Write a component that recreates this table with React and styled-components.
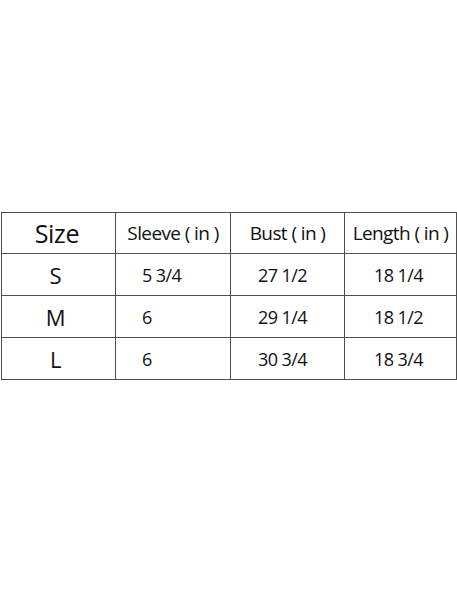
import React from 'react';
import styled, { createGlobalStyle } from 'styled-components';

const Global = createGlobalStyle`
  html, body {
    margin: 0;
    padding: 0;
    background: #fff;
  }
`;

const Page = styled.div`
  width: 457px;
  height: 600px;
  padding: 212px 0 0 1px;
  box-sizing: border-box;
  font-family: "Open Sans", "Noto Sans", sans-serif;
  color: #111;
`;

const Table = styled.table`
  border-collapse: collapse;
  table-layout: fixed;
  width: 455px;
`;

const Cell = styled.td`
  border: 1.5px solid #505050;
  height: 41px;
  padding: 0 ${({ $right }) => ($right ? `${$right}px` : '0')} 0 ${({ $pad }) => ($pad ? `${$pad}px` : '0')};
  text-align: ${({ $pad }) => ($pad ? 'left' : 'center')};
  font-size: ${({ $size }) => $size || 18}px;
  letter-spacing: ${({ $tight }) => ($tight ? '-0.6px' : '-0.3px')};
  white-space: nowrap;
  vertical-align: middle;
`;

const HeadCell = styled(Cell).attrs({ as: 'th' })`
  font-weight: 400;
  height: 40px;
`;

const rows = [
  ['S', '5 3/4', '27 1/2', '18 1/4'],
  ['M', '6', '29 1/4', '18 1/2'],
  ['L', '6', '30 3/4', '18 3/4'],
];

const App = () => (
  <>
    <Global />
    <Page>
      <Table>
        <colgroup>
          <col style={{ width: 114 }} />
          <col style={{ width: 115 }} />
          <col style={{ width: 114 }} />
          <col style={{ width: 112 }} />
        </colgroup>
        <thead>
          <tr>
            <HeadCell $size={25} $right={3}>Size</HeadCell>
            <HeadCell $size={19} $tight>Sleeve ( in )</HeadCell>
            <HeadCell $size={19} $tight>Bust ( in )</HeadCell>
            <HeadCell $size={19} $tight>Length ( in )</HeadCell>
          </tr>
        </thead>
        <tbody>
          {rows.map(([size, sleeve, bust, length]) => (
            <tr key={size}>
              <Cell $size={22} $right={6}>{size}</Cell>
              <Cell $pad={26} $tight>{sleeve}</Cell>
              <Cell $pad={27} $tight>{bust}</Cell>
              <Cell $pad={29} $tight>{length}</Cell>
            </tr>
          ))}
        </tbody>
      </Table>
    </Page>
  </>
);

export default App;
